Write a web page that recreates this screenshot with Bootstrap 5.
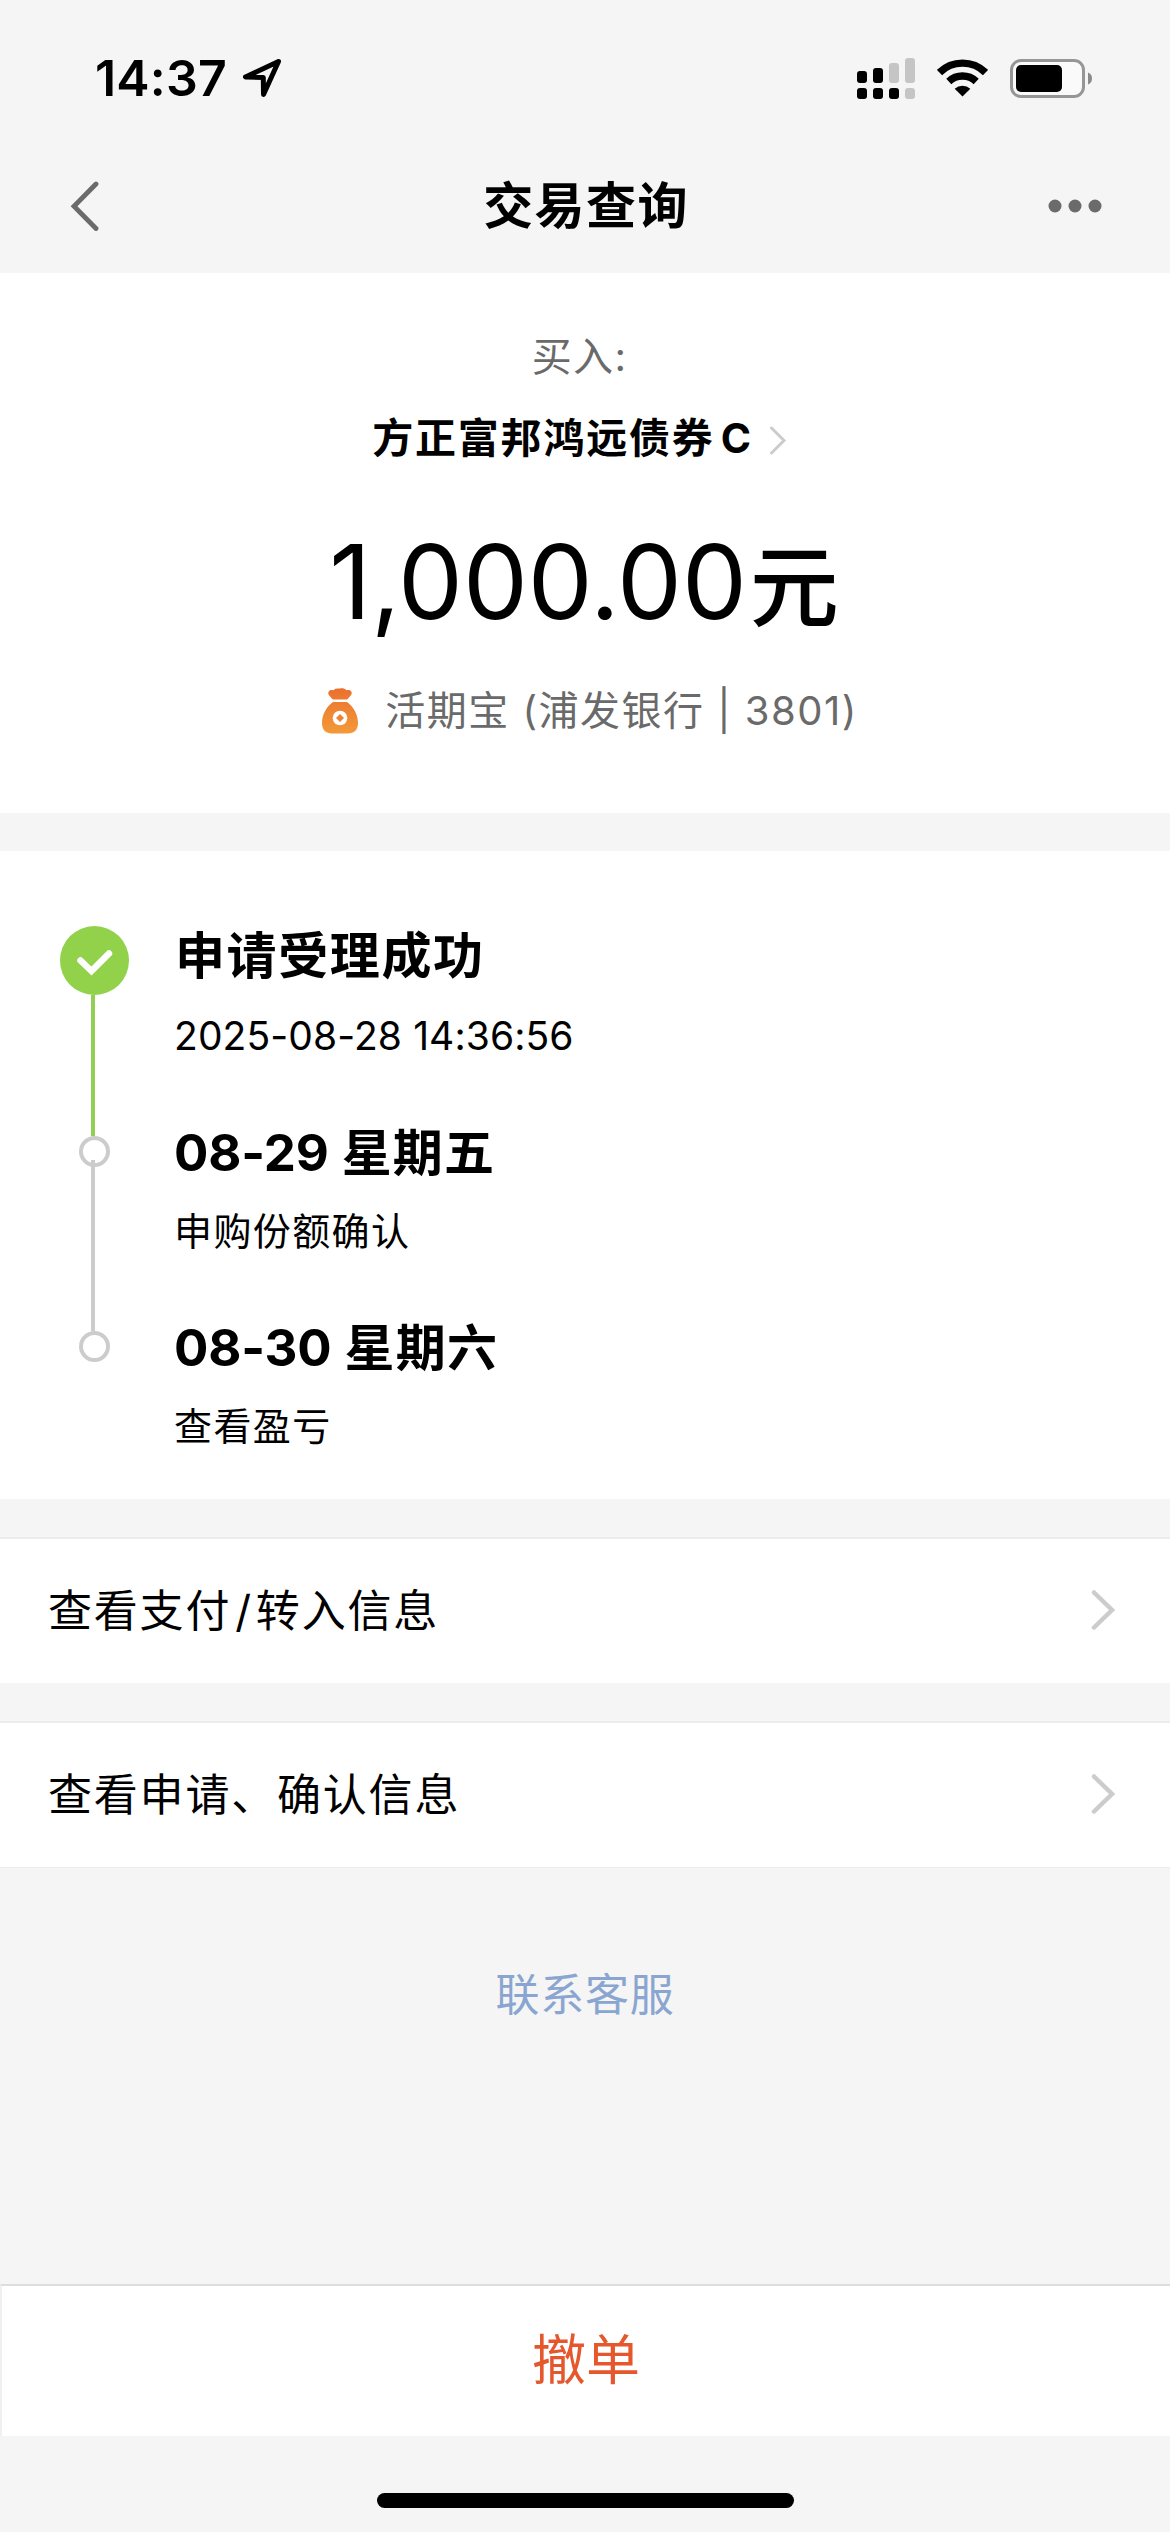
<!DOCTYPE html>
<html lang="zh-CN">
<head>
<meta charset="utf-8">
<meta name="viewport" content="width=device-width, initial-scale=1">
<title>交易查询</title>
<link href="https://cdn.jsdelivr.net/npm/bootstrap@5.3.0/dist/css/bootstrap.min.css" rel="stylesheet">
<style>
  body { background: #f5f5f5; color: #000; font-family: Inter, "Noto Sans CJK SC", sans-serif; line-height: 1; height: 2532px; overflow: hidden; }
  svg { display: block; flex: none; }
  .status-bar { height: 156px; padding: 0 78px 0 95px; }
  .clock { font-size: 50px; font-weight: 600; letter-spacing: .2px; width: 148px; }
  .status-icons { gap: 22px; }
  .title-bar { height: 117px; padding: 0 68px 18px 70px; }
  .title-bar h1 { font-size: 50px; font-weight: 700; letter-spacing: 1.4px; line-height: 1; }
  .bar-side { width: 54px; }
  .t-gray { color: #6a6a6a; }
  .summary { height: 540px; padding-top: 54px; }
  .kind { height: 60px; font-size: 40px; letter-spacing: 1.4px; padding-right: 11px; }
  .fund { height: 60px; margin-top: 21px; font-size: 41px; font-weight: 700; letter-spacing: 1.8px; padding-right: 11px; }
  .fund-class { margin-left: 6px; }
  .amount { height: 110px; margin-top: 58px; font-size: 103px; letter-spacing: -.1px; padding-right: 2px; }
  .amount-unit { font-size: 89px; font-weight: 500; margin-left: 3px; }
  .account { height: 60px; margin-top: 45px; padding-left: 9px; font-size: 40px; letter-spacing: 1.5px; gap: 26px; }
  .timeline { height: 648px; margin-top: 38px; padding: 75px 0 0 60px; }
  .rail { width: 69px; margin-right: 45px; }
  .rail-line { width: 4px; margin-right: 3px; background: #ccc; }
  .rail-done { background: #93cf57; }
  .step-ring { width: 31px; height: 31px; flex: none; border: 4px solid #ccc; }
  .step-first { height: 210px; }
  .step-next { height: 195px; }
  .step-title { font-size: 50px; font-weight: 700; height: 50px; margin-top: -9px; letter-spacing: 1.2px; }
  .step-date { font-size: 51px; letter-spacing: -.2px; }
  .step-first .step-title { margin-top: 5px; padding-left: 1px; letter-spacing: 1.6px; }
  .step-note { font-size: 38px; height: 50px; margin-top: 29px; letter-spacing: 1.4px; }
  .step-time { font-size: 39px; letter-spacing: .1px; }
  .link-row { height: 146px; margin-top: 38px; padding: 0 55px 0 48px; border-top: 2px solid #ececec; font-size: 44px; letter-spacing: 1.8px; }
  .link-row svg { margin-bottom: 3px; }
  .link-row + .link-row { height: 147px; border-bottom: 1px solid #ececec; }
  .slash { margin: 0 3px 0 4px; }
  .service { height: 60px; margin-top: 97px; font-size: 44px; letter-spacing: .8px; color: #8aa6d0; text-decoration: none; }
  .cancel { height: 152px; margin-top: 259px; border: 0 solid #ddd; border-top-width: 2px; border-left: 2px solid #f0f0f0; font-size: 54px; color: #e5582d; border-radius: 0; line-height: 1; flex: none; }
  .home-bar { width: 417px; height: 15px; margin-top: 57px; }
</style>
</head>
<body class="d-flex flex-column">
<header>
  <div class="status-bar d-flex align-items-center justify-content-between">
    <div class="d-flex align-items-center">
      <span class="clock">14:37</span>
      <svg width="38" height="38" viewBox="0 0 38 38"><path d="M35.500 2.500 2.500 18l17.800.6.200 16.900z" fill="none" stroke="#000" stroke-width="5" stroke-linejoin="round"/></svg>
    </div>
    <div class="status-icons d-flex align-items-center">
      <svg width="58" height="41" viewBox="0 0 58 41">
        <g fill="#c5c5c5"><rect x="32" y="5" width="10" height="20" rx="3"/><rect x="48" width="10" height="25" rx="3"/><rect x="48" y="30" width="10" height="11" rx="3"/></g>
        <rect y="13" width="10" height="12" rx="3"/><rect x="16" y="10" width="10" height="15" rx="3"/><rect y="30" width="10" height="11" rx="3"/><rect x="16" y="30" width="10" height="11" rx="3"/><rect x="32" y="30" width="10" height="11" rx="3"/>
      </svg>
      <svg width="51" height="38" viewBox="0 0 51 38">
        <path d="M2.500 13.500a33 33 0 0 1 46 0M11.800 22.500a20 20 0 0 1 27.400 0" fill="none" stroke="#000" stroke-width="7.400"/>
        <path d="M17.700 29.800a11.500 11.500 0 0 1 15.600 0L25.500 37.500z"/>
      </svg>
      <svg width="82" height="39" viewBox="0 0 82 39">
        <rect x="1.500" y="1.500" width="72" height="36" rx="9.500" fill="#fafafa" stroke="#969696" stroke-width="3"/>
        <rect x="6" y="6" width="46" height="27" rx="5"/>
        <path d="M78 13.500q4 1.500 4 6t-4 6z" fill="#8a8a8a"/>
      </svg>
    </div>
  </div>
  <nav class="title-bar d-flex align-items-center justify-content-between">
    <div class="bar-side"><svg width="30" height="50" viewBox="0 0 30 50"><path d="M26 3 4 25.200 26 47.500" fill="none" stroke="#6b6b6b" stroke-width="4.800" stroke-linecap="round"/></svg></div>
    <h1 class="m-0">交易查询</h1>
    <svg class="bar-side" height="14" viewBox="0 0 54 14" fill="#6b6b6b"><circle cx="7" cy="7" r="6.500"/><circle cx="27" cy="7" r="6.500"/><circle cx="47" cy="7" r="6.500"/></svg>
  </nav>
</header>

<section class="summary bg-white">
  <div class="kind t-gray d-flex align-items-center justify-content-center">买入:</div>
  <div class="fund d-flex align-items-center justify-content-center">
    <span>方正富邦鸿远债券<span class="fund-class">C</span></span>
    <svg class="ms-3 mt-1" width="18" height="30" viewBox="0 0 18 30"><path d="M2.500 3 15 15.500 2.500 28" fill="none" stroke="#ccc" stroke-width="3" stroke-linecap="round"/></svg>
  </div>
  <div class="amount d-flex align-items-center justify-content-center"><span>1,000.00<span class="amount-unit">元</span></span></div>
  <div class="account t-gray d-flex align-items-center justify-content-center">
    <svg width="38" height="46" viewBox="0 0 38 46">
      <defs><linearGradient id="bag" x1="0" y1="0" x2="0" y2="46" gradientUnits="userSpaceOnUse"><stop stop-color="#ea702f"/><stop offset="1" stop-color="#f39a38"/></linearGradient></defs>
      <path fill="url(#bag)" d="M12 11.500C9 8.500 6 6 7.800 3.500 9 1.800 11 2 12.500 2.300 14 0 16 .6 19 .4s5 .1 6.500 1.900c1.500-.3 3.500-.5 4.700 1.200 1.800 2.500-1.200 5-4.200 8zM12 14h14c7 5 11 13 11 21 0 7-4 10.500-10 10.500H11c-6 0-10-3.500-10-10.500 0-8 4-16 11-21z"/>
      <circle cx="19" cy="30" r="7.300" fill="#fff"/><path d="m19 26 4 4-4 4-4-4z" fill="#ee8334"/>
    </svg>
    <span>活期宝 (浦发银行 | 3801)</span>
  </div>
</section>

<section class="timeline bg-white">
  <div class="step-first d-flex">
    <div class="rail d-flex flex-column align-items-center">
      <svg width="69" height="69" viewBox="0 0 69 69"><circle cx="34.500" cy="34.500" r="34.500" fill="#92d14a"/><path d="m20.500 34.500 11 10.500L49 27.500" fill="none" stroke="#fff" stroke-width="6.500" stroke-linecap="round"/></svg>
      <div class="rail-line rail-done flex-grow-1"></div>
    </div>
    <div>
      <div class="step-title d-flex align-items-center">申请受理成功</div>
      <div class="step-note step-time d-flex align-items-center">2025-08-28 14:36:56</div>
    </div>
  </div>
  <div class="step-next d-flex">
    <div class="rail d-flex flex-column align-items-center">
      <div class="step-ring rounded-circle"></div>
      <div class="rail-line flex-grow-1" style="margin-top:-7px"></div>
    </div>
    <div>
      <div class="step-title d-flex align-items-center"><span><span class="step-date">08-29</span> 星期五</span></div>
      <div class="step-note d-flex align-items-center">申购份额确认</div>
    </div>
  </div>
  <div class="d-flex">
    <div class="rail d-flex flex-column align-items-center"><div class="step-ring rounded-circle"></div></div>
    <div>
      <div class="step-title d-flex align-items-center"><span><span class="step-date">08-30</span> 星期六</span></div>
      <div class="step-note d-flex align-items-center">查看盈亏</div>
    </div>
  </div>
</section>

<div class="link-row bg-white d-flex align-items-center justify-content-between">
  <span>查看支付<span class="slash">/</span>转入信息</span>
  <svg width="24" height="40" viewBox="0 0 24 40"><path d="M3 2.500 21 20 3 37.500" fill="none" stroke="#ccc" stroke-width="4.500" stroke-linecap="round"/></svg>
</div>
<div class="link-row bg-white d-flex align-items-center justify-content-between">
  <span>查看申请、确认信息</span>
  <svg width="24" height="40" viewBox="0 0 24 40"><path d="M3 2.500 21 20 3 37.500" fill="none" stroke="#ccc" stroke-width="4.500" stroke-linecap="round"/></svg>
</div>

<a href="#" class="service d-flex align-items-center justify-content-center">联系客服</a>
<button type="button" class="cancel bg-white w-100 p-0">撤单</button>
<div class="home-bar bg-black rounded-pill mx-auto"></div>
<script src="https://cdn.jsdelivr.net/npm/bootstrap@5.3.0/dist/js/bootstrap.bundle.min.js"></script>
</body>
</html>
